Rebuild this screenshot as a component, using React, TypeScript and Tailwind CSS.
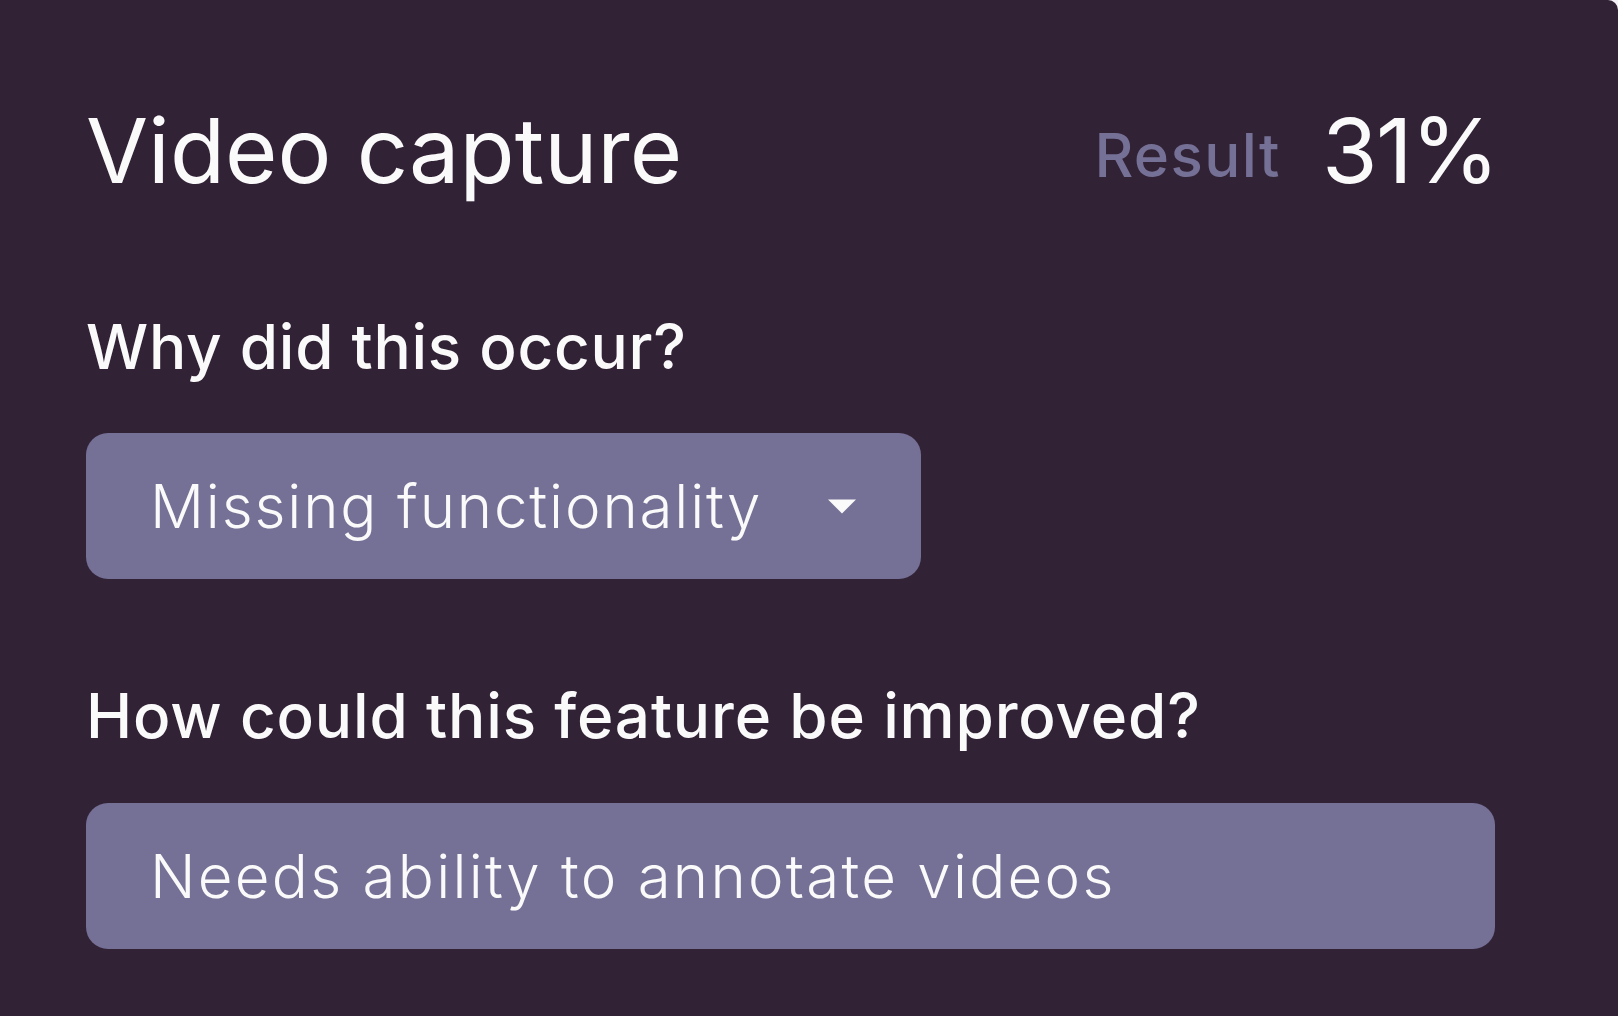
export default function App() {
  return (
    <div className="min-h-screen w-full bg-[#f4f2f7]" style={{ fontFamily: 'Inter, "Noto Sans", sans-serif' }}>
      <div className="h-[1016px] w-full rounded-tr-[10px] bg-[#322236] pl-[86px] pr-[123px] pt-[106px] text-[#fafafa]">
        {/* header */}
        <div className="mr-[-3px] flex items-start justify-between">
          <h1 className="text-[90px] font-normal leading-none">Video capture</h1>
          <div className="flex items-start gap-[41px]">
            <span className="mt-[19px] text-[60px] font-medium leading-none tracking-[1.4px] text-[#757095]">Result</span>
            <span className="text-[90px] font-normal leading-none tracking-[-1.5px]">31%</span>
          </div>
        </div>

        {/* reason */}
        <h2 className="mt-[120px] text-[62px] font-medium leading-none tracking-[0.75px]">Why did this occur?</h2>
        <div className="mt-[55px] flex h-[146px] w-[835px] items-center justify-between rounded-[22px] bg-[#757095] pl-[64px] pr-[64px]">
          <span className="text-[60px] font-light leading-none tracking-[1.85px]">Missing functionality</span>
          <svg width="30" height="15" viewBox="0 0 30 15" className="shrink-0">
            <path d="M1 0.5 H29 L15 14.5 Z" fill="#fafafa" />
          </svg>
        </div>

        {/* improvement */}
        <h2 className="mt-[106px] text-[62px] font-medium leading-none tracking-[0.85px]">How could this feature be improved?</h2>
        <div className="mt-[56px] flex h-[146px] w-full items-center rounded-[22px] bg-[#757095] pl-[64px]">
          <span className="text-[60px] font-light leading-none tracking-[2.25px]">Needs ability to annotate videos</span>
        </div>
      </div>
    </div>
  );
}
